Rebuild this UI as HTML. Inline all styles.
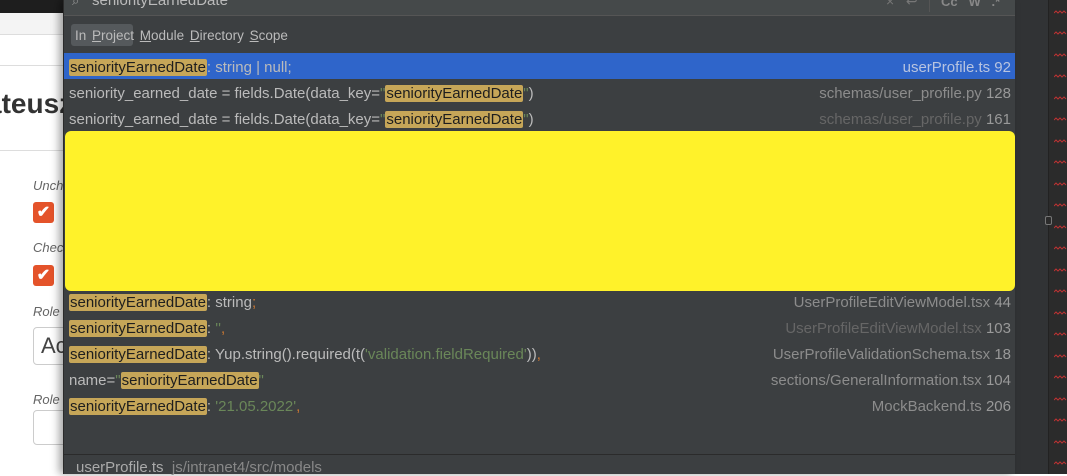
<!DOCTYPE html>
<html><head><style>
*{margin:0;padding:0;box-sizing:border-box}
body{width:1067px;height:474px;overflow:hidden;position:relative;background:#fff;font-family:"Liberation Sans",sans-serif}
.abs{position:absolute}
.dlg{position:absolute;left:63px;top:0;width:952px;height:474px;background:#3c3f41;box-shadow:-4px 0 8px rgba(0,0,0,.35);border-left:1px solid #2b2b2b;font-size:15px;color:#bbbbbb}
.row{position:absolute;left:0;width:951px;height:26px;line-height:30px;padding-left:5px;white-space:nowrap}
.row .r{position:absolute;right:4px;top:0;color:#8c8c8c}
.row .r b{font-weight:normal;color:#999}
.hl{background:#c6a658;color:#1e1e1e;border-radius:2px;padding:0 1px}
.s{color:#6a8759}.o{color:#cc7832}
.sel{background:#2f65ca}
</style></head><body>
<div class="abs" style="left:0;top:0;width:63px;height:13px;background:#1e1e1e"></div>
<div class="abs" style="left:0;top:13px;width:63px;height:22px;background:#f4f4f4;border-bottom:1px solid #ddd"></div>
<div class="abs" style="left:0;top:65px;width:63px;height:1px;background:#ddd"></div>
<div class="abs" style="left:-14px;top:88px;font:bold 28px 'Liberation Sans',sans-serif;color:#333">ateusz</div>
<div class="abs" style="left:0;top:150px;width:63px;height:1px;background:#ddd"></div>
<div class="abs" style="left:33px;top:178px;font:italic 13px 'Liberation Sans',sans-serif;color:#666">Unchecked</div>
<div class="abs" style="left:33px;top:202px;width:21px;height:21px;background:#e4532a;border-radius:3px;color:#fff;font-size:16px;line-height:21px;text-align:center;font-weight:bold">✔</div>
<div class="abs" style="left:33px;top:240px;font:italic 13px 'Liberation Sans',sans-serif;color:#666">Checked</div>
<div class="abs" style="left:33px;top:265px;width:21px;height:21px;background:#e4532a;border-radius:3px;color:#fff;font-size:16px;line-height:21px;text-align:center;font-weight:bold">✔</div>
<div class="abs" style="left:33px;top:304px;font:italic 13px 'Liberation Sans',sans-serif;color:#666">Role</div>
<div class="abs" style="left:33px;top:327px;width:60px;height:38px;border:1px solid #ccc;border-radius:4px;font-size:22px;line-height:36px;padding-left:7px;color:#444">Ac</div>
<div class="abs" style="left:33px;top:392px;font:italic 13px 'Liberation Sans',sans-serif;color:#666">Role s</div>
<div class="abs" style="left:33px;top:410px;width:60px;height:35px;border:1px solid #ccc;border-radius:4px"></div>
<div class="abs" style="left:1015px;top:0;width:33px;height:474px;background:#313335"></div>
<div class="abs" style="left:1048px;top:0;width:1px;height:474px;background:#222"></div>
<div class="abs" style="left:1049px;top:0;width:18px;height:474px;background:#2b2b2b"></div>
<div class="abs" style="left:1045px;top:216px;width:7px;height:9px;border:1px solid #777;border-radius:2px;background:#2b2b2b"></div>
<svg class="abs" style="left:1054px;top:0" width="13" height="474">
<defs><path id="w" d="M0 0l2-2 2 2 2-2 2 2 2-2 2 2" stroke="#b33" fill="none"/></defs>
<use href="#w" y="13"/><use href="#w" y="34"/><use href="#w" y="56"/><use href="#w" y="77"/><use href="#w" y="99"/><use href="#w" y="120"/><use href="#w" y="142"/><use href="#w" y="163"/><use href="#w" y="185"/><use href="#w" y="206"/><use href="#w" y="228"/><use href="#w" y="249"/><use href="#w" y="271"/><use href="#w" y="292"/><use href="#w" y="314"/><use href="#w" y="335"/><use href="#w" y="357"/><use href="#w" y="378"/><use href="#w" y="400"/><use href="#w" y="421"/><use href="#w" y="443"/><use href="#w" y="464"/>
</svg>
<div class="dlg">
 <div class="abs" style="left:0;top:0;width:951px;height:16px;background:#45494a;border-bottom:1px solid #555"></div>
 <div class="abs" style="left:8px;top:-7px;color:#999;font-size:13px">⌕</div>
 <div class="abs" style="left:28px;top:-8px;font-size:15px;color:#bbb">seniorityEarnedDate</div>
 <div class="abs" style="left:822px;top:-7px;color:#777;font-size:14px">×&nbsp;&nbsp;&nbsp;↩</div>
 <div class="abs" style="left:865px;top:0;width:1px;height:12px;background:#555"></div>
 <div class="abs" style="left:877px;top:-6px;color:#888;font-size:13px;font-weight:bold">Cc&nbsp;&nbsp; W&nbsp;&nbsp; .*</div>
 <div class="abs" style="left:7px;top:24px;width:62px;height:22px;background:#55595c;border-radius:3px"></div>
 <div class="abs" style="left:11px;top:28px;font-size:13.5px;color:#bbb;word-spacing:2px">In <u>P</u>roject <u>M</u>odule <u>D</u>irectory <u>S</u>cope</div>
 <div class="row sel" style="top:53px"><span class="hl">seniorityEarnedDate</span>: string | null;<span class="r" style="color:#b8c4e0">userProfile.ts 92</span></div>
 <div class="row" style="top:79px">seniority_earned_date = fields.Date(data_key=<span class="s">"</span><span class="hl">seniorityEarnedDate</span><span class="s">"</span>)<span class="r">schemas/user_profile.py <b>128</b></span></div>
 <div class="row" style="top:105px">seniority_earned_date = fields.Date(data_key=<span class="s">"</span><span class="hl">seniorityEarnedDate</span><span class="s">"</span>)<span class="r" style="color:#666">schemas/user_profile.py <b>161</b></span></div>
 <div class="row" style="top:288px"><span class="hl">seniorityEarnedDate</span>: string<span class="o">;</span><span class="r">UserProfileEditViewModel.tsx <b>44</b></span></div>
 <div class="abs" style="left:1px;top:131px;width:950px;height:160px;background:#fff22a;border-radius:6px"></div>
 <div class="row" style="top:314px"><span class="hl">seniorityEarnedDate</span>: <span class="s">''</span><span class="o">,</span><span class="r" style="color:#666">UserProfileEditViewModel.tsx <b>103</b></span></div>
 <div class="row" style="top:340px"><span class="hl">seniorityEarnedDate</span>: Yup.string().required(t(<span class="s">'validation.fieldRequired'</span>))<span class="o">,</span><span class="r">UserProfileValidationSchema.tsx <b>18</b></span></div>
 <div class="row" style="top:366px">name=<span class="s">"</span><span class="hl">seniorityEarnedDate</span><span class="s">"</span><span class="r">sections/GeneralInformation.tsx <b>104</b></span></div>
 <div class="row" style="top:392px"><span class="hl">seniorityEarnedDate</span>: <span class="s">'21.05.2022'</span><span class="o">,</span><span class="r">MockBackend.ts <b>206</b></span></div>
 <div class="abs" style="left:0;top:454px;width:951px;height:1px;background:#2b2b2b"></div>
 <div class="abs" style="left:12px;top:459px;font-size:15px;color:#aaa">userProfile.ts &nbsp;<span style="color:#888">js/intranet4/src/models</span></div>
</div>
</body></html>
